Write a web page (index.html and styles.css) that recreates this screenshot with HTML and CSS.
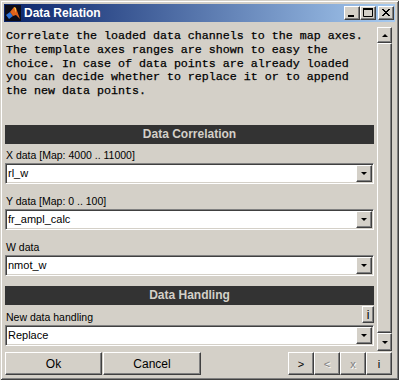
FILE: index.html
```html
<!DOCTYPE html>
<html lang="en">
<head>
    <meta charset="UTF-8">
    <title>Data Relation</title>
    <link rel="stylesheet" href="styles.css">
</head>
<body>
    <div class="window">
        <div class="titlebar">
            <svg class="app-icon" width="16" height="16" viewBox="0 0 16 16">
                <rect width="16" height="16" fill="#0c0c18"/>
                <polygon points="1,10 5,7 8,11 4,14" fill="#2f74d9"/>
                <polygon points="5,7 9,2 11,3 15,14 11,10 8,11" fill="#e2631b"/>
                <polygon points="9,2 11,3 11,8" fill="#f6c343"/>
            </svg>
            <span class="title">Data Relation</span>
            <div class="caption-buttons">
                <span class="cap-btn">
                    <svg width="14" height="12" viewBox="0 0 14 12"><rect x="3" y="8" width="6" height="2" fill="#000"/></svg>
                </span>
                <span class="cap-btn">
                    <svg width="14" height="12" viewBox="0 0 14 12"><path d="M2.5 1.5h9v8h-9z M2 2.5h10" fill="none" stroke="#000" stroke-width="1"/><rect x="2" y="1" width="10" height="2" fill="#000"/></svg>
                </span>
                <span class="cap-btn close">
                    <svg width="14" height="12" viewBox="0 0 14 12"><path d="M3 2l7 7M4 2l7 7M10 2l-7 7M11 2l-7 7" stroke="#000" stroke-width="1"/></svg>
                </span>
            </div>
        </div>
        <div class="client">
            <div class="upper">
                <div class="main">
                    <p class="desc">Correlate the loaded data channels to the map axes.
The template axes ranges are shown to easy the
choice. In case of data points are already loaded
you can decide whether to replace it or to append
the new data points.</p>

                    <div class="section-head">Data Correlation</div>

                    <div class="field first">
                        <div class="label">X data [Map: 4000 .. 11000]</div>
                        <div class="popup"><span class="popup-value">rl_w</span><span class="popup-arrow"></span></div>
                    </div>
                    <div class="field">
                        <div class="label">Y data [Map: 0 .. 100]</div>
                        <div class="popup"><span class="popup-value">fr_ampl_calc</span><span class="popup-arrow"></span></div>
                    </div>
                    <div class="field">
                        <div class="label">W data</div>
                        <div class="popup"><span class="popup-value">nmot_w</span><span class="popup-arrow"></span></div>
                    </div>

                    <div class="section-head handling">Data Handling</div>

                    <div class="label-row">
                        <span class="label">New data handling</span>
                        <span class="btn info-btn">i</span>
                    </div>
                    <div class="popup handling-popup"><span class="popup-value">Replace</span><span class="popup-arrow"></span></div>
                </div>
                <div class="scrollbar">
                    <span class="scroll-btn up"><span class="tri-up"></span></span>
                    <span class="scroll-thumb"></span>
                    <span class="scroll-btn down"><span class="tri-down"></span></span>
                </div>
            </div>
            <div class="button-row">
                <span class="btn wide">Ok</span>
                <span class="btn wide cancel">Cancel</span>
                <span class="spacer"></span>
                <span class="btn nav">&gt;</span>
                <span class="btn nav disabled">&lt;</span>
                <span class="btn nav disabled">x</span>
                <span class="btn nav">i</span>
            </div>
        </div>
    </div>
</body>
</html>
```

FILE: styles.css
```css
body {
    margin: 0;
    padding: 0;
    background-color: #d4d0c8;
    font-family: 'Liberation Sans', Arial, sans-serif;
    font-size: 11px;
    color: #000;
}

.window {
    width: 399px;
    height: 380px;
    box-sizing: border-box;
    padding: 4px;
    background-color: #d4d0c8;
    box-shadow: inset 1px 1px #d4d0c8, inset -1px -1px #404040,
                inset 2px 2px #ffffff, inset -2px -2px #808080;
}

/* title bar */

.titlebar {
    height: 18px;
    display: flex;
    align-items: center;
    background: linear-gradient(to right, #0a246a, #a6caf0);
}

.app-icon {
    margin-left: 1px;
    flex-shrink: 0;
}

.title {
    margin-left: 3px;
    color: #fff;
    font-weight: bold;
    font-size: 12px;
    flex: 1;
}

.caption-buttons {
    display: flex;
    margin-right: 1px;
}

.cap-btn {
    width: 16px;
    height: 14px;
    box-sizing: border-box;
    display: flex;
    align-items: center;
    justify-content: center;
    background-color: #d4d0c8;
    border: 1px solid;
    border-color: #fff #404040 #404040 #fff;
    box-shadow: inset -1px -1px #808080;
}

.cap-btn.close {
    margin-left: 2px;
}

/* client area */

.client {
    height: 354px;
    box-sizing: border-box;
    padding: 0 3px 1px 1px;
    display: flex;
    flex-direction: column;
}

.upper {
    height: 329px;
    display: flex;
}

.main {
    width: 369px;
}

.desc {
    margin: 0;
    height: 95px;
    padding: 8px 0 0 1px;
    font-family: 'Liberation Mono', 'Courier New', monospace;
    font-size: 11.67px;
    line-height: 13.75px;
    white-space: pre;
    -webkit-text-stroke: 0.25px #000;
}

.section-head {
    height: 19px;
    line-height: 19px;
    background-color: #333333;
    color: #d4d0c8;
    font-weight: bold;
    font-size: 12px;
    text-align: center;
}

.section-head.handling {
    margin-top: 10px;
}

.field {
    margin-top: 11px;
}

.field.first {
    margin-top: 5px;
}

.label {
    height: 13px;
    line-height: 13px;
    padding-left: 1px;
    margin-bottom: 1px;
    font-size: 10.5px;
}

.label-row {
    height: 19px;
    display: flex;
    align-items: flex-end;
    justify-content: space-between;
}

.label-row .label {
    margin-bottom: 0;
}

.popup {
    height: 21px;
    box-sizing: border-box;
    padding: 1px;
    display: flex;
    background-color: #fff;
    border: 1px solid;
    border-color: #808080 #fff #fff #808080;
    box-shadow: inset 1px 1px #404040, inset -1px -1px #d4d0c8;
}

.handling-popup {
    margin-top: 1px;
}

.popup-value {
    flex: 1;
    line-height: 17px;
    padding-left: 1px;
}

.popup-arrow {
    width: 16px;
    box-sizing: border-box;
    display: flex;
    align-items: center;
    justify-content: center;
    background-color: #d4d0c8;
    border: 1px solid;
    border-color: #fff #404040 #404040 #fff;
    box-shadow: inset -1px -1px #808080;
}

.popup-arrow::after,
.tri-down {
    content: '';
    width: 0;
    height: 0;
    border-left: 3px solid transparent;
    border-right: 3px solid transparent;
    border-top: 3px solid #000;
}

.tri-up {
    width: 0;
    height: 0;
    border-left: 3px solid transparent;
    border-right: 3px solid transparent;
    border-bottom: 3px solid #000;
}

/* scrollbar */

.scrollbar {
    margin-left: 3px;
    margin-top: 5px;
    width: 15px;
    display: flex;
    flex-direction: column;
}

.scroll-btn,
.scroll-thumb,
.btn {
    box-sizing: border-box;
    background-color: #d4d0c8;
    border: 1px solid;
    border-color: #fff #404040 #404040 #fff;
    box-shadow: inset -1px -1px #808080;
}

.scroll-btn {
    height: 16px;
    display: flex;
    align-items: center;
    justify-content: center;
}

.scroll-btn.down {
    height: 18px;
}

.scroll-thumb {
    flex: 1;
}

/* buttons */

.btn {
    display: flex;
    align-items: center;
    justify-content: center;
}

.info-btn {
    width: 12px;
    height: 17px;
    margin-bottom: 1px;
    font-size: 12px;
}

.button-row {
    margin-top: 1px;
    height: 23px;
    display: flex;
}

.btn.wide {
    width: 97px;
    font-size: 12px;
}

.btn.cancel {
    width: 98px;
    margin-left: 1px;
}

.spacer {
    flex: 1;
}

.btn.nav {
    width: 26px;
    font-size: 11px;
}

.btn.disabled {
    color: #808080;
    text-shadow: 1px 1px #fff;
}
```
